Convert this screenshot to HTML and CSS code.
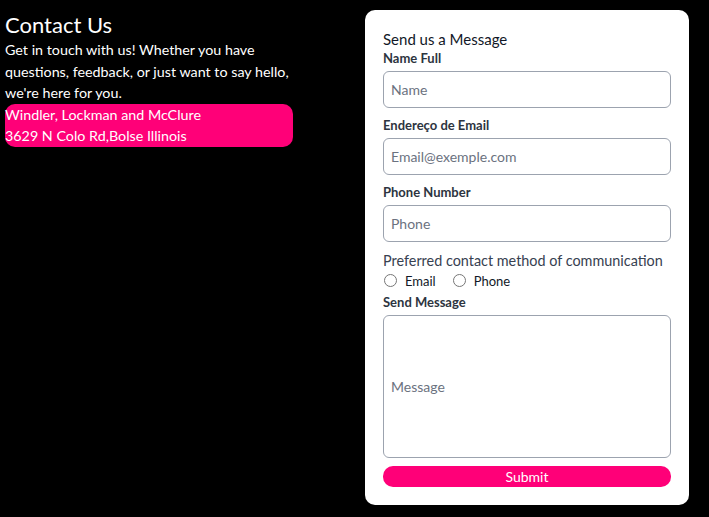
FILE: index.html
```html
<!DOCTYPE html>
<html lang="en">
<head>
<meta charset="utf-8">
<title>Contact Us</title>
<link rel="stylesheet" href="styles.css">
</head>
<body>
<main class="page">
  <section class="intro">
    <h1 class="title">Contact Us</h1>
    <p class="lead">Get in touch with us! Whether you have questions, feedback, or just want to say hello, we're here for you.</p>
    <div class="address">
      <div>Windler, Lockman and McClure</div>
      <div>3629 N Colo Rd,Bolse Illinois</div>
    </div>
  </section>
  <form class="card">
    <div class="card-title">Send us a Message</div>
    <label class="label" for="name">Name Full</label>
    <input class="field" id="name" type="text" placeholder="Name">
    <label class="label gap" for="email">Endereço de Email</label>
    <input class="field" id="email" type="email" placeholder="Email@exemple.com">
    <label class="label gap" for="phone">Phone Number</label>
    <input class="field" id="phone" type="tel" placeholder="Phone">
    <div class="pref">Preferred contact method of communication</div>
    <div class="radios">
      <label class="radio"><input type="radio" name="method"><span>Email</span></label>
      <label class="radio"><input type="radio" name="method"><span>Phone</span></label>
    </div>
    <label class="label msg-label" for="message">Send Message</label>
    <input class="field message" id="message" type="text" placeholder="Message">
    <button class="submit" type="button">Submit</button>
  </form>
</main>
</body>
</html>
```
FILE: styles.css
```css
* { box-sizing: border-box; }
body {
  margin: 0;
  background: #000;
  font-family: Lato, "Open Sans", sans-serif;
  color: #fff;
}
.page {
  display: flex;
  justify-content: space-between;
  align-items: flex-start;
  padding: 10px 20px 0 5px;
}
.intro { width: 288px; }
.title {
  margin: 0;
  font-size: 22px;
  font-weight: 400;
  line-height: 29px;
}
.lead {
  margin: 0;
  font-size: 14.3px;
  line-height: 21.5px;
}
.address {
  background: #ff0078;
  border-radius: 10px;
  font-size: 14.3px;
  line-height: 21.5px;
}
.card {
  width: 324px;
  background: #fff;
  border-radius: 10px;
  padding: 19px 18px 18px;
  display: flex;
  flex-direction: column;
  color: #111827;
}
.card-title { font-size: 15px; line-height: 20px; margin-bottom: 1px; }
.label {
  font-size: 13px;
  font-weight: 700;
  line-height: 17px;
  margin-bottom: 4px;
  color: #2d3440;
}
.label.gap { margin-top: 9px; }
.field {
  height: 37px;
  border: 1px solid #9ca3af;
  border-radius: 6px;
  padding: 0 7px;
  font: inherit;
  font-size: 14px;
  color: #111827;
  outline: none;
}
.field::placeholder { color: #6b7280; }
.pref {
  margin-top: 10px;
  font-size: 14.4px;
  line-height: 18px;
  color: #374151;
}
.radios {
  display: flex;
  gap: 16px;
  height: 19px;
  align-items: center;
  margin-top: 1px;
}
.radio {
  display: flex;
  align-items: center;
  gap: 8px;
  font-size: 13px;
  color: #111827;
}
.radio input { margin: 0 0 0 1px; width: 13px; height: 13px; }
.msg-label { margin-top: 4px; }
.field.message { height: 143px; }
.submit {
  margin-top: 8px;
  height: 21px;
  border: 0;
  border-radius: 10px;
  background: #ff0078;
  color: #fff;
  font: inherit;
  font-size: 14px;
  padding: 0;
}
```
